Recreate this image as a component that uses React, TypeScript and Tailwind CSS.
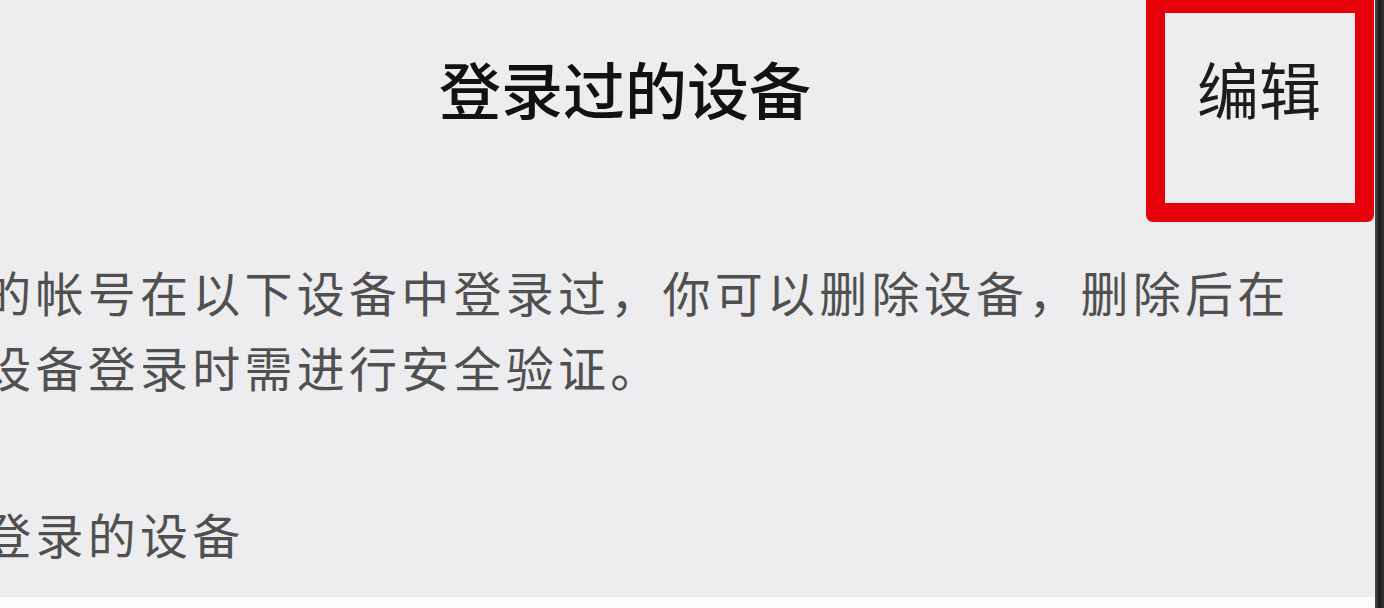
import React from 'react';

const cjk = '"Noto Sans CJK SC", "Noto Sans", sans-serif';

export default function App() {
  return (
    <div
      className="flex h-[608px] w-[1384px] overflow-hidden bg-[#ededef]"
      style={{ fontFamily: cjk }}
    >
      <div className="flex min-w-0 flex-1 flex-col">
        {/* the phone screen is wider than the crop, its left part is off-screen */}
        <div className="ml-[-125px] flex flex-1 flex-col">
          <header className="grid h-[176px] grid-cols-[1fr_auto_1fr] items-center px-[54px]">
            <div />
            <h1 className="text-[62px] font-medium leading-none text-[#111]">登录过的设备</h1>
            <div className="relative justify-self-end">
              <button className="text-[62px] font-normal leading-none text-[#1c1c1c]">编辑</button>
              <span className="pointer-events-none absolute -bottom-[102px] -left-[51px] -right-[53px] -top-[63px] rounded-[7px] border-[19px] border-[#e8000b]" />
            </div>
          </header>

          <div className="px-[56px]">
            <p className="mt-[78px] text-[48px] leading-[75px] tracking-[4.25px] text-[#505050]">
              你的帐号在以下设备中登录过，你可以删除设备，删除后在该设备登录时需进行安全验证。
            </p>
            <h2 className="mt-[92px] text-[48px] font-normal leading-[75px] tracking-[4.25px] text-[#505050]">
              近登录的设备
            </h2>
          </div>

          <div className="mt-auto h-[11px] bg-[#fbfbfb]" />
        </div>
      </div>
      <div className="w-[9px] bg-gradient-to-r from-[#4a4a4a] via-[#1c1c1c] to-[#333]" />
    </div>
  );
}
